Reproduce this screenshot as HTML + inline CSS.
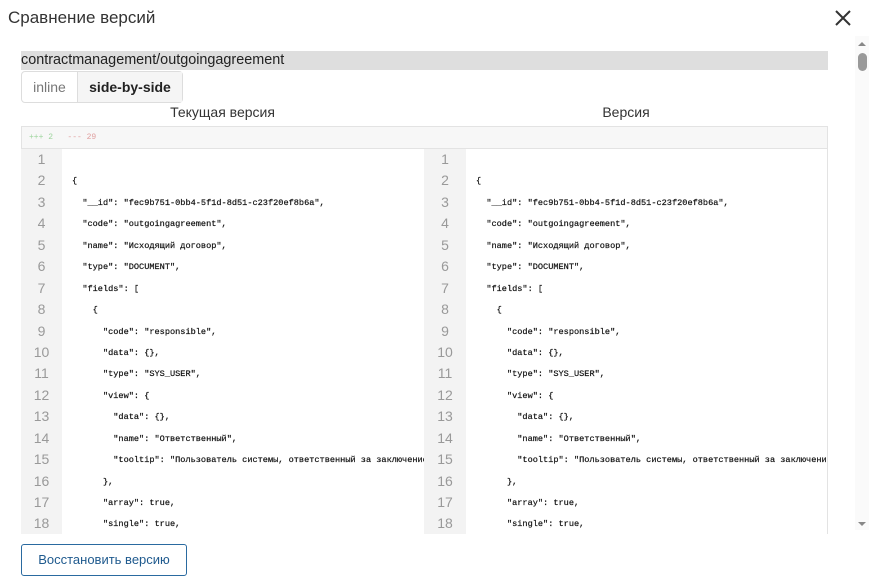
<!DOCTYPE html>
<html><head><meta charset="utf-8"><style>
*{margin:0;padding:0;box-sizing:border-box}
body{width:869px;height:580px;background:#fff;font-family:"Liberation Sans",sans-serif;position:relative;overflow:hidden;color:#333}
.abs{position:absolute}
.title{left:8px;top:8px;font-size:17px;color:#333}
.path{left:21px;top:51px;width:807px;height:19px;background:#dedede;font-size:14.4px;line-height:19px;color:#222}
.tabs{left:21px;top:71px;width:162px;height:32px;border:1px solid #ddd;border-radius:4px;display:flex;font-size:14px}
.tabs div{line-height:30px;text-align:center}
.h{top:104px;font-size:14px;color:#333;text-align:center}
.stat{left:21px;top:126px;width:807px;height:23px;background:#f7f7f7;border:1px solid #e3e3e3;font-family:"Liberation Mono",monospace;font-size:8px;line-height:22px;padding-left:7px}
.pane{top:149px;height:385px;overflow:hidden;background:#fff}
.gut{background:#f3f3f3;color:#999;font-size:14px;text-align:center}
.row{height:21.45px;line-height:22.5px;white-space:pre}
.code{font-family:"Liberation Mono",monospace;font-size:8.6px;color:#111;padding-left:10px;-webkit-text-stroke:0.2px #111}
.btn{left:21px;top:544px;width:166px;height:32px;border:1px solid #2a6aa0;border-radius:3px;color:#1f5a8e;font-size:13px;text-align:center;line-height:30px}
</style></head><body>
<div class="abs title">Сравнение версий</div>
<svg class="abs" style="left:835px;top:10px" width="16" height="16" viewBox="0 0 16 16"><path d="M1 1L15 15M15 1L1 15" stroke="#333" stroke-width="2"/></svg>
<div class="abs" style="left:855px;top:36px;width:14px;height:494px;background:#fafafa"></div>
<svg class="abs" style="left:857px;top:40px" width="10" height="8"><path d="M1 6L5 2L9 6Z" fill="#888"/></svg>
<div class="abs" style="left:858px;top:53px;width:9px;height:18px;border-radius:5px;background:#999"></div>
<svg class="abs" style="left:857px;top:520px" width="10" height="8"><path d="M1 2L5 6L9 2Z" fill="#888"/></svg>
<div class="abs path">contractmanagement/outgoingagreement</div>
<div class="abs tabs"><div style="width:56px;color:#777;border-right:1px solid #ddd">inline</div><div style="width:104px;font-weight:bold;color:#222;background:#f5f5f5">side-by-side</div></div>
<div class="abs h" style="left:21px;width:403px">Текущая версия</div>
<div class="abs h" style="left:424px;width:404px">Версия</div>
<div class="abs stat"><span style="color:#9fd59f">+++ 2</span>&nbsp;&nbsp;&nbsp;<span style="color:#e0a0a0">--- 29</span></div>
<div class="abs pane gut" style="left:21px;width:41px" id="g1"></div>
<div class="abs pane code" style="left:62px;width:362px" id="c1"></div>
<div class="abs pane gut" style="left:424px;width:42px" id="g2"></div>
<div class="abs pane code" style="left:466px;width:362px;border-right:1px solid #e3e3e3" id="c2"></div>
<div class="abs btn">Восстановить версию</div>
<script>
var L=['','{','  "__id": "fec9b751-0bb4-5f1d-8d51-c23f20ef8b6a",','  "code": "outgoingagreement",','  "name": "Исходящий договор",','  "type": "DOCUMENT",','  "fields": [','    {','      "code": "responsible",','      "data": {},','      "type": "SYS_USER",','      "view": {','        "data": {},','        "name": "Ответственный",','        "tooltip": "Пользователь системы, ответственный за заключение договора"','      },','      "array": true,','      "single": true,'];
var g='',c='';for(var i=0;i<L.length;i++){g+='<div class="row" style="line-height:21.45px">'+(i+1)+'</div>';c+='<div class="row">'+(L[i].replace(/&/g,'&amp;').replace(/</g,'&lt;')||' ')+'</div>';}
['g1','g2'].forEach(function(id){document.getElementById(id).innerHTML=g});
['c1','c2'].forEach(function(id){document.getElementById(id).innerHTML=c});
</script>
</body></html>
